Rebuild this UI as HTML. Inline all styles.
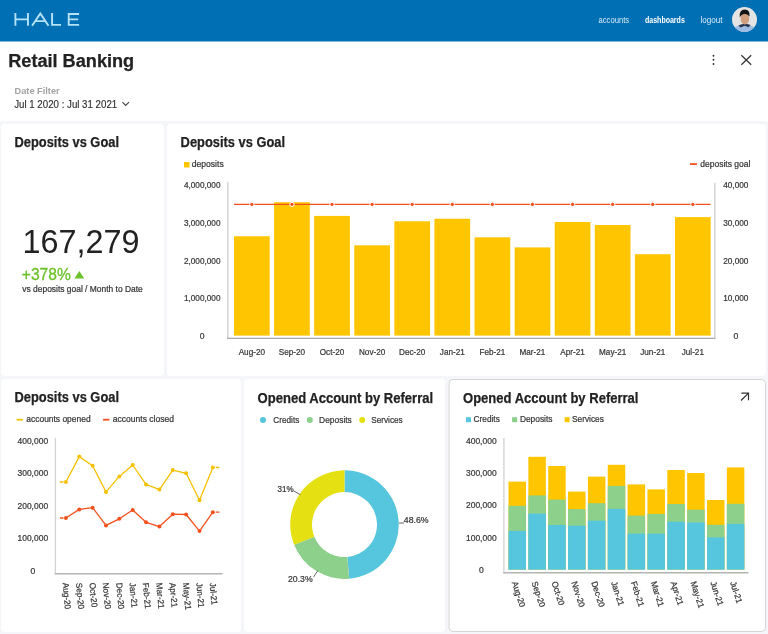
<!DOCTYPE html>
<html><head><meta charset="utf-8"><style>
html,body{margin:0;padding:0;background:#fff;width:768px;height:634px;overflow:hidden}
svg{display:block;font-family:"Liberation Sans", sans-serif;will-change:transform}
</style></head><body>
<svg width="768" height="634" viewBox="0 0 768 634">
<rect x="0" y="121" width="768" height="513" fill="#f5f6fa"/>
<rect x="0" y="0" width="768" height="41.5" fill="#006fb4"/>
<g fill="none" stroke="#b4e3f8" stroke-width="1.9"><path d="M15.4 13.1V25.8M27.95 13.1V25.8M15.4 19.4H27.95"/><path d="M32.1 25.8L40.3 13.4L48.5 25.8M35.6 21.1H45"/><path d="M52.1 13.1V24.85H61.1"/><path d="M79.1 14.05H68.7V24.85H79.1M68.7 19.4H78.2"/></g>
<text x="598.5" y="23.1" font-size="9" fill="#d6ebfa" textLength="30.6" lengthAdjust="spacingAndGlyphs" stroke="none">accounts</text>
<text x="645" y="23.1" font-size="9" fill="#ffffff" font-weight="700" textLength="39.8" lengthAdjust="spacingAndGlyphs">dashboards</text>
<text x="700.5" y="23.1" font-size="9" fill="#d6ebfa" textLength="22" lengthAdjust="spacingAndGlyphs" stroke="none">logout</text>
<circle cx="744.5" cy="19.5" r="12.5" fill="#e4e4e4"/>
<clipPath id="av"><circle cx="744.5" cy="19.5" r="12.5"/></clipPath>
<g clip-path="url(#av)"><path d="M731 36 L733 29 Q737 24.5 744.5 24.5 Q752 24.5 756 29 L758 36Z" fill="#9dbce3"/><path d="M738.5 25.5 Q741.5 23.5 744.8 24 Q748 23.5 750.5 25 L748.5 27.2 L744.8 25.8 L740.5 27.5Z" fill="#2b3652"/><ellipse cx="744.9" cy="18.6" rx="4.3" ry="5.9" fill="#cf9f7e"/><path d="M739.7 17.5 Q739 9.6 744.8 9.6 Q750.2 9.8 749.6 16.5 Q747.5 13.6 744.6 14 Q741.4 14 739.7 17.5Z" fill="#151515"/></g>
<text x="8.2" y="66.8" font-size="18" fill="#222" font-weight="700" textLength="126" lengthAdjust="spacingAndGlyphs" stroke="#222" stroke-width="0.25">Retail Banking</text>
<circle cx="713.5" cy="55.8" r="0.95" fill="#333"/>
<circle cx="713.5" cy="59.8" r="0.95" fill="#333"/>
<circle cx="713.5" cy="64" r="0.95" fill="#333"/>
<path d="M741.3 55.2L751.2 64.8M751.2 55.2L741.3 64.8" stroke="#333" stroke-width="1.2"/>
<text x="14.5" y="94.1" font-size="9.8" fill="#a3a3a3" font-weight="700" textLength="45.2" lengthAdjust="spacingAndGlyphs">Date Filter</text>
<text x="14.2" y="107.6" font-size="10.5" fill="#2e2e2e" textLength="103" lengthAdjust="spacingAndGlyphs" stroke="#2e2e2e" stroke-width="0.15">Jul 1 2020 : Jul 31 2021</text>
<path d="M122.4 102.2L125.7 105.5L129 102.2" fill="none" stroke="#444" stroke-width="1.1"/>
<rect x="1" y="124" width="163" height="252" rx="4" fill="#fff"/>
<rect x="167" y="124" width="599" height="252" rx="4" fill="#fff"/>
<rect x="1" y="379" width="240" height="253" rx="4" fill="#fff"/>
<rect x="244" y="379" width="201" height="253" rx="4" fill="#fff"/>
<rect x="449.1" y="379.5" width="316.4" height="252" rx="4" fill="#fff" stroke="#d5d5d5" stroke-width="1"/>
<text x="14.5" y="146.6" font-size="14.4" fill="#222" font-weight="700" textLength="104.5" lengthAdjust="spacingAndGlyphs" stroke="#222" stroke-width="0.25">Deposits vs Goal</text>
<text x="22.6" y="253.2" font-size="32.5" fill="#222" textLength="117" lengthAdjust="spacingAndGlyphs">167,279</text>
<text x="21.8" y="279.6" font-size="16" fill="#6cc22a" textLength="49" lengthAdjust="spacingAndGlyphs" stroke="#6cc22a" stroke-width="0.3">+378%</text>
<path d="M74.5 278.6L79.35 271L84.2 278.6Z" fill="#6cc22a"/>
<text x="22.3" y="291.7" font-size="8.4" fill="#363636" textLength="120.5" lengthAdjust="spacingAndGlyphs" stroke="#363636" stroke-width="0.22">vs deposits goal / Month to Date</text>
<text x="180.6" y="146.6" font-size="14.4" fill="#222" font-weight="700" textLength="104.5" lengthAdjust="spacingAndGlyphs" stroke="#222" stroke-width="0.25">Deposits vs Goal</text>
<rect x="184" y="162" width="5.5" height="5.5" fill="#ffc600"/>
<text x="191.7" y="166.6" font-size="8.6" fill="#363636" textLength="32" lengthAdjust="spacingAndGlyphs" stroke="#363636" stroke-width="0.22">deposits</text>
<rect x="690" y="163.2" width="7" height="1.8" fill="#f4511e"/>
<text x="700.2" y="166.6" font-size="8.6" fill="#363636" textLength="50.2" lengthAdjust="spacingAndGlyphs" stroke="#363636" stroke-width="0.22">deposits goal</text>
<text x="202.2" y="188.4" font-size="8.6" fill="#363636" text-anchor="middle" textLength="36.6" lengthAdjust="spacingAndGlyphs" stroke="#363636" stroke-width="0.22">4,000,000</text>
<text x="202.2" y="225.95000000000002" font-size="8.6" fill="#363636" text-anchor="middle" textLength="36.6" lengthAdjust="spacingAndGlyphs" stroke="#363636" stroke-width="0.22">3,000,000</text>
<text x="202.2" y="263.5" font-size="8.6" fill="#363636" text-anchor="middle" textLength="36.6" lengthAdjust="spacingAndGlyphs" stroke="#363636" stroke-width="0.22">2,000,000</text>
<text x="202.2" y="301.05" font-size="8.6" fill="#363636" text-anchor="middle" textLength="36.6" lengthAdjust="spacingAndGlyphs" stroke="#363636" stroke-width="0.22">1,000,000</text>
<text x="202.2" y="338.6" font-size="8.6" fill="#363636" text-anchor="middle" stroke="#363636" stroke-width="0.22">0</text>
<text x="735.8" y="188.4" font-size="8.6" fill="#363636" text-anchor="middle" textLength="25.3" lengthAdjust="spacingAndGlyphs" stroke="#363636" stroke-width="0.22">40,000</text>
<text x="735.8" y="225.95000000000002" font-size="8.6" fill="#363636" text-anchor="middle" textLength="25.3" lengthAdjust="spacingAndGlyphs" stroke="#363636" stroke-width="0.22">30,000</text>
<text x="735.8" y="263.5" font-size="8.6" fill="#363636" text-anchor="middle" textLength="25.3" lengthAdjust="spacingAndGlyphs" stroke="#363636" stroke-width="0.22">20,000</text>
<text x="735.8" y="301.05" font-size="8.6" fill="#363636" text-anchor="middle" textLength="25.3" lengthAdjust="spacingAndGlyphs" stroke="#363636" stroke-width="0.22">10,000</text>
<text x="735.8" y="338.6" font-size="8.6" fill="#363636" text-anchor="middle" stroke="#363636" stroke-width="0.22">0</text>
<rect x="234.00" y="236.25" width="35.7" height="99.35" fill="#ffc600"/>
<text x="251.85" y="354.6" font-size="8.6" fill="#363636" text-anchor="middle" textLength="26.33" lengthAdjust="spacingAndGlyphs" stroke="#363636" stroke-width="0.22">Aug-20</text>
<rect x="274.09" y="202.2" width="35.7" height="133.40" fill="#ffc600"/>
<text x="291.94" y="354.6" font-size="8.6" fill="#363636" text-anchor="middle" textLength="26.33" lengthAdjust="spacingAndGlyphs" stroke="#363636" stroke-width="0.22">Sep-20</text>
<rect x="314.18" y="215.9" width="35.7" height="119.70" fill="#ffc600"/>
<text x="332.03" y="354.6" font-size="8.6" fill="#363636" text-anchor="middle" textLength="24.51" lengthAdjust="spacingAndGlyphs" stroke="#363636" stroke-width="0.22">Oct-20</text>
<rect x="354.27" y="245.3" width="35.7" height="90.30" fill="#ffc600"/>
<text x="372.12" y="354.6" font-size="8.6" fill="#363636" text-anchor="middle" textLength="26.31" lengthAdjust="spacingAndGlyphs" stroke="#363636" stroke-width="0.22">Nov-20</text>
<rect x="394.36" y="221.25" width="35.7" height="114.35" fill="#ffc600"/>
<text x="412.21" y="354.6" font-size="8.6" fill="#363636" text-anchor="middle" textLength="26.31" lengthAdjust="spacingAndGlyphs" stroke="#363636" stroke-width="0.22">Dec-20</text>
<rect x="434.45" y="218.75" width="35.7" height="116.85" fill="#ffc600"/>
<text x="452.30" y="354.6" font-size="8.6" fill="#363636" text-anchor="middle" textLength="24.97" lengthAdjust="spacingAndGlyphs" stroke="#363636" stroke-width="0.22">Jan-21</text>
<rect x="474.54" y="237.3" width="35.7" height="98.30" fill="#ffc600"/>
<text x="492.39" y="354.6" font-size="8.6" fill="#363636" text-anchor="middle" textLength="25.87" lengthAdjust="spacingAndGlyphs" stroke="#363636" stroke-width="0.22">Feb-21</text>
<rect x="514.63" y="247.4" width="35.7" height="88.20" fill="#ffc600"/>
<text x="532.48" y="354.6" font-size="8.6" fill="#363636" text-anchor="middle" textLength="25.87" lengthAdjust="spacingAndGlyphs" stroke="#363636" stroke-width="0.22">Mar-21</text>
<rect x="554.72" y="222" width="35.7" height="113.60" fill="#ffc600"/>
<text x="572.57" y="354.6" font-size="8.6" fill="#363636" text-anchor="middle" textLength="24.51" lengthAdjust="spacingAndGlyphs" stroke="#363636" stroke-width="0.22">Apr-21</text>
<rect x="594.81" y="225" width="35.7" height="110.60" fill="#ffc600"/>
<text x="612.66" y="354.6" font-size="8.6" fill="#363636" text-anchor="middle" textLength="27.23" lengthAdjust="spacingAndGlyphs" stroke="#363636" stroke-width="0.22">May-21</text>
<rect x="634.90" y="254.2" width="35.7" height="81.40" fill="#ffc600"/>
<text x="652.75" y="354.6" font-size="8.6" fill="#363636" text-anchor="middle" textLength="24.97" lengthAdjust="spacingAndGlyphs" stroke="#363636" stroke-width="0.22">Jun-21</text>
<rect x="674.99" y="217.1" width="35.7" height="118.50" fill="#ffc600"/>
<text x="692.84" y="354.6" font-size="8.6" fill="#363636" text-anchor="middle" textLength="22.23" lengthAdjust="spacingAndGlyphs" stroke="#363636" stroke-width="0.22">Jul-21</text>
<path d="M227.8 182V338.2M714.8 338.2V182.7" fill="none" stroke="#d2d2d2" stroke-width="1.4"/>
<path d="M227.1 338.4H715.5" fill="none" stroke="#a8a8a8" stroke-width="1.2"/>
<path d="M234 204.4H710.6" stroke="#f4511e" stroke-width="1.1"/>
<circle cx="251.85" cy="204.4" r="2.15" fill="#f4511e" stroke="#fff" stroke-width="1"/>
<circle cx="291.94" cy="204.4" r="2.15" fill="#f4511e" stroke="#fff" stroke-width="1"/>
<circle cx="332.03" cy="204.4" r="2.15" fill="#f4511e" stroke="#fff" stroke-width="1"/>
<circle cx="372.12" cy="204.4" r="2.15" fill="#f4511e" stroke="#fff" stroke-width="1"/>
<circle cx="412.21" cy="204.4" r="2.15" fill="#f4511e" stroke="#fff" stroke-width="1"/>
<circle cx="452.30" cy="204.4" r="2.15" fill="#f4511e" stroke="#fff" stroke-width="1"/>
<circle cx="492.39" cy="204.4" r="2.15" fill="#f4511e" stroke="#fff" stroke-width="1"/>
<circle cx="532.48" cy="204.4" r="2.15" fill="#f4511e" stroke="#fff" stroke-width="1"/>
<circle cx="572.57" cy="204.4" r="2.15" fill="#f4511e" stroke="#fff" stroke-width="1"/>
<circle cx="612.66" cy="204.4" r="2.15" fill="#f4511e" stroke="#fff" stroke-width="1"/>
<circle cx="652.75" cy="204.4" r="2.15" fill="#f4511e" stroke="#fff" stroke-width="1"/>
<circle cx="692.84" cy="204.4" r="2.15" fill="#f4511e" stroke="#fff" stroke-width="1"/>
<text x="14.5" y="401.9" font-size="14.4" fill="#222" font-weight="700" textLength="104.5" lengthAdjust="spacingAndGlyphs" stroke="#222" stroke-width="0.25">Deposits vs Goal</text>
<rect x="16.6" y="418.8" width="6.2" height="1.8" fill="#f5c000"/>
<text x="26.3" y="422" font-size="8.6" fill="#363636" textLength="64.3" lengthAdjust="spacingAndGlyphs" stroke="#363636" stroke-width="0.22">accounts opened</text>
<rect x="103" y="418.8" width="6.4" height="1.8" fill="#f4511e"/>
<text x="112.7" y="422" font-size="8.6" fill="#363636" textLength="61.3" lengthAdjust="spacingAndGlyphs" stroke="#363636" stroke-width="0.22">accounts closed</text>
<text x="32.8" y="444.0" font-size="8.6" fill="#363636" text-anchor="middle" textLength="30.6" lengthAdjust="spacingAndGlyphs" stroke="#363636" stroke-width="0.22">400,000</text>
<text x="32.8" y="476.4" font-size="8.6" fill="#363636" text-anchor="middle" textLength="30.6" lengthAdjust="spacingAndGlyphs" stroke="#363636" stroke-width="0.22">300,000</text>
<text x="32.8" y="508.8" font-size="8.6" fill="#363636" text-anchor="middle" textLength="30.6" lengthAdjust="spacingAndGlyphs" stroke="#363636" stroke-width="0.22">200,000</text>
<text x="32.8" y="541.1999999999999" font-size="8.6" fill="#363636" text-anchor="middle" textLength="30.6" lengthAdjust="spacingAndGlyphs" stroke="#363636" stroke-width="0.22">100,000</text>
<text x="32.8" y="573.6" font-size="8.6" fill="#363636" text-anchor="middle" stroke="#363636" stroke-width="0.22">0</text>
<path d="M55.4 438V573.8" fill="none" stroke="#d2d2d2" stroke-width="1.3"/>
<path d="M54.7 573.8H222.5" fill="none" stroke="#b4b4b4" stroke-width="1.6"/>
<path d="M65.90 482 L79.26 456.6 L92.62 465.8 L105.98 491.9 L119.34 476.4 L132.70 465 L146.06 484.4 L159.42 489.6 L172.78 470.1 L186.14 473.3 L199.50 500.2 L212.86 467.5" fill="none" stroke="#f5c000" stroke-width="1.3" stroke-linejoin="round"/>
<path d="M59.9 482H63.5M215.7 467.5H219.4" fill="none" stroke="#f5c000" stroke-width="1.3"/>
<circle cx="65.90" cy="482" r="2" fill="#f5c000"/>
<circle cx="79.26" cy="456.6" r="2" fill="#f5c000"/>
<circle cx="92.62" cy="465.8" r="2" fill="#f5c000"/>
<circle cx="105.98" cy="491.9" r="2" fill="#f5c000"/>
<circle cx="119.34" cy="476.4" r="2" fill="#f5c000"/>
<circle cx="132.70" cy="465" r="2" fill="#f5c000"/>
<circle cx="146.06" cy="484.4" r="2" fill="#f5c000"/>
<circle cx="159.42" cy="489.6" r="2" fill="#f5c000"/>
<circle cx="172.78" cy="470.1" r="2" fill="#f5c000"/>
<circle cx="186.14" cy="473.3" r="2" fill="#f5c000"/>
<circle cx="199.50" cy="500.2" r="2" fill="#f5c000"/>
<circle cx="212.86" cy="467.5" r="2" fill="#f5c000"/>
<path d="M65.90 518 L79.26 509.4 L92.62 507.7 L105.98 525.4 L119.34 518.8 L132.70 510 L146.06 522.3 L159.42 526.6 L172.78 514.2 L186.14 514.5 L199.50 531.1 L212.86 512.2" fill="none" stroke="#f4511e" stroke-width="1.3" stroke-linejoin="round"/>
<path d="M59.9 518H63.5M215.7 512.2H219.4" fill="none" stroke="#f4511e" stroke-width="1.3"/>
<circle cx="65.90" cy="518" r="2" fill="#f4511e"/>
<circle cx="79.26" cy="509.4" r="2" fill="#f4511e"/>
<circle cx="92.62" cy="507.7" r="2" fill="#f4511e"/>
<circle cx="105.98" cy="525.4" r="2" fill="#f4511e"/>
<circle cx="119.34" cy="518.8" r="2" fill="#f4511e"/>
<circle cx="132.70" cy="510" r="2" fill="#f4511e"/>
<circle cx="146.06" cy="522.3" r="2" fill="#f4511e"/>
<circle cx="159.42" cy="526.6" r="2" fill="#f4511e"/>
<circle cx="172.78" cy="514.2" r="2" fill="#f4511e"/>
<circle cx="186.14" cy="514.5" r="2" fill="#f4511e"/>
<circle cx="199.50" cy="531.1" r="2" fill="#f4511e"/>
<circle cx="212.86" cy="512.2" r="2" fill="#f4511e"/>
<text transform="translate(62.70 583.0) rotate(85)" font-size="8.6" fill="#363636" stroke="#363636" stroke-width="0.22" textLength="26.33" lengthAdjust="spacingAndGlyphs">Aug-20</text>
<text transform="translate(76.06 583.0) rotate(85)" font-size="8.6" fill="#363636" stroke="#363636" stroke-width="0.22" textLength="26.33" lengthAdjust="spacingAndGlyphs">Sep-20</text>
<text transform="translate(89.42 583.0) rotate(85)" font-size="8.6" fill="#363636" stroke="#363636" stroke-width="0.22" textLength="24.51" lengthAdjust="spacingAndGlyphs">Oct-20</text>
<text transform="translate(102.78 583.0) rotate(85)" font-size="8.6" fill="#363636" stroke="#363636" stroke-width="0.22" textLength="26.31" lengthAdjust="spacingAndGlyphs">Nov-20</text>
<text transform="translate(116.14 583.0) rotate(85)" font-size="8.6" fill="#363636" stroke="#363636" stroke-width="0.22" textLength="26.31" lengthAdjust="spacingAndGlyphs">Dec-20</text>
<text transform="translate(129.50 583.0) rotate(85)" font-size="8.6" fill="#363636" stroke="#363636" stroke-width="0.22" textLength="24.97" lengthAdjust="spacingAndGlyphs">Jan-21</text>
<text transform="translate(142.86 583.0) rotate(85)" font-size="8.6" fill="#363636" stroke="#363636" stroke-width="0.22" textLength="25.87" lengthAdjust="spacingAndGlyphs">Feb-21</text>
<text transform="translate(156.22 583.0) rotate(85)" font-size="8.6" fill="#363636" stroke="#363636" stroke-width="0.22" textLength="25.87" lengthAdjust="spacingAndGlyphs">Mar-21</text>
<text transform="translate(169.58 583.0) rotate(85)" font-size="8.6" fill="#363636" stroke="#363636" stroke-width="0.22" textLength="24.51" lengthAdjust="spacingAndGlyphs">Apr-21</text>
<text transform="translate(182.94 583.0) rotate(85)" font-size="8.6" fill="#363636" stroke="#363636" stroke-width="0.22" textLength="27.23" lengthAdjust="spacingAndGlyphs">May-21</text>
<text transform="translate(196.30 583.0) rotate(85)" font-size="8.6" fill="#363636" stroke="#363636" stroke-width="0.22" textLength="24.97" lengthAdjust="spacingAndGlyphs">Jun-21</text>
<text transform="translate(209.66 583.0) rotate(85)" font-size="8.6" fill="#363636" stroke="#363636" stroke-width="0.22" textLength="22.23" lengthAdjust="spacingAndGlyphs">Jul-21</text>
<text x="257.6" y="402.5" font-size="14.4" fill="#222" font-weight="700" textLength="175.5" lengthAdjust="spacingAndGlyphs" stroke="#222" stroke-width="0.25">Opened Account by Referral</text>
<circle cx="263" cy="420" r="3" fill="#56c5de"/>
<text x="273.3" y="422.8" font-size="8.6" fill="#363636" textLength="26" lengthAdjust="spacingAndGlyphs" stroke="#363636" stroke-width="0.22">Credits</text>
<circle cx="309.8" cy="420" r="3" fill="#8dd08c"/>
<text x="319.1" y="422.8" font-size="8.6" fill="#363636" textLength="32.7" lengthAdjust="spacingAndGlyphs" stroke="#363636" stroke-width="0.22">Deposits</text>
<circle cx="362.2" cy="420" r="3" fill="#e5e012"/>
<text x="371.2" y="422.8" font-size="8.6" fill="#363636" textLength="31.5" lengthAdjust="spacingAndGlyphs" stroke="#363636" stroke-width="0.22">Services</text>
<path d="M344.50 470.30 A54.3 54.3 0 0 1 349.23 578.69 L347.33 556.98 A32.5 32.5 0 0 0 344.50 492.10Z" fill="#56c5de"/>
<path d="M349.23 578.69 A54.3 54.3 0 0 1 294.12 544.85 L314.35 536.72 A32.5 32.5 0 0 0 347.33 556.98Z" fill="#8dd08c"/>
<path d="M294.12 544.85 A54.3 54.3 0 0 1 344.50 470.30 L344.50 492.10 A32.5 32.5 0 0 0 314.35 536.72Z" fill="#e5e012"/>
<path d="M398.9 523H404M293.8 491L300.4 494.7M313.7 576.9L317.7 570.7" stroke="#555" stroke-width="0.9" fill="none"/>
<text x="403.8" y="523.1" font-size="8.6" fill="#363636" textLength="24.8" lengthAdjust="spacingAndGlyphs" stroke="#363636" stroke-width="0.22">48.6%</text>
<text x="277.5" y="491.6" font-size="8.6" fill="#363636" textLength="16.2" lengthAdjust="spacingAndGlyphs" stroke="#363636" stroke-width="0.22">31%</text>
<text x="288" y="581.7" font-size="8.6" fill="#363636" textLength="24.6" lengthAdjust="spacingAndGlyphs" stroke="#363636" stroke-width="0.22">20.3%</text>
<text x="463" y="402.9" font-size="14.4" fill="#222" font-weight="700" textLength="175.5" lengthAdjust="spacingAndGlyphs" stroke="#222" stroke-width="0.25">Opened Account by Referral</text>
<path d="M741.4 393.1H748.5V400.2M748.5 393.1L741 400.5" fill="none" stroke="#333" stroke-width="1.2"/>
<rect x="466" y="417.2" width="5" height="5" fill="#56c5de"/>
<text x="473.6" y="422.1" font-size="8.6" fill="#363636" textLength="26.2" lengthAdjust="spacingAndGlyphs" stroke="#363636" stroke-width="0.22">Credits</text>
<rect x="512.1" y="417.2" width="5" height="5" fill="#8dd08c"/>
<text x="519.9" y="422.1" font-size="8.6" fill="#363636" textLength="32.6" lengthAdjust="spacingAndGlyphs" stroke="#363636" stroke-width="0.22">Deposits</text>
<rect x="564.6" y="417.2" width="5" height="5" fill="#ffc600"/>
<text x="572" y="422.1" font-size="8.6" fill="#363636" textLength="31.8" lengthAdjust="spacingAndGlyphs" stroke="#363636" stroke-width="0.22">Services</text>
<text x="481.3" y="443.90000000000003" font-size="8.6" fill="#363636" text-anchor="middle" textLength="30.6" lengthAdjust="spacingAndGlyphs" stroke="#363636" stroke-width="0.22">400,000</text>
<text x="481.3" y="476.12" font-size="8.6" fill="#363636" text-anchor="middle" textLength="30.6" lengthAdjust="spacingAndGlyphs" stroke="#363636" stroke-width="0.22">300,000</text>
<text x="481.3" y="508.34000000000003" font-size="8.6" fill="#363636" text-anchor="middle" textLength="30.6" lengthAdjust="spacingAndGlyphs" stroke="#363636" stroke-width="0.22">200,000</text>
<text x="481.3" y="540.5600000000001" font-size="8.6" fill="#363636" text-anchor="middle" textLength="30.6" lengthAdjust="spacingAndGlyphs" stroke="#363636" stroke-width="0.22">100,000</text>
<text x="481.3" y="572.7800000000001" font-size="8.6" fill="#363636" text-anchor="middle" stroke="#363636" stroke-width="0.22">0</text>
<rect x="508.50" y="481.6" width="17.5" height="88.00" fill="#ffc600"/>
<rect x="508.50" y="505.8" width="17.5" height="63.80" fill="#8dd08c"/>
<rect x="508.50" y="530.9" width="17.5" height="38.70" fill="#56c5de"/>
<rect x="528.35" y="456.8" width="17.5" height="112.80" fill="#ffc600"/>
<rect x="528.35" y="495.4" width="17.5" height="74.20" fill="#8dd08c"/>
<rect x="528.35" y="513.6" width="17.5" height="56.00" fill="#56c5de"/>
<rect x="548.20" y="466" width="17.5" height="103.60" fill="#ffc600"/>
<rect x="548.20" y="499.6" width="17.5" height="70.00" fill="#8dd08c"/>
<rect x="548.20" y="525" width="17.5" height="44.60" fill="#56c5de"/>
<rect x="568.05" y="491.6" width="17.5" height="78.00" fill="#ffc600"/>
<rect x="568.05" y="509.1" width="17.5" height="60.50" fill="#8dd08c"/>
<rect x="568.05" y="525.7" width="17.5" height="43.90" fill="#56c5de"/>
<rect x="587.90" y="476.6" width="17.5" height="93.00" fill="#ffc600"/>
<rect x="587.90" y="503.2" width="17.5" height="66.40" fill="#8dd08c"/>
<rect x="587.90" y="520.7" width="17.5" height="48.90" fill="#56c5de"/>
<rect x="607.75" y="464.8" width="17.5" height="104.80" fill="#ffc600"/>
<rect x="607.75" y="485.9" width="17.5" height="83.70" fill="#8dd08c"/>
<rect x="607.75" y="508.9" width="17.5" height="60.70" fill="#56c5de"/>
<rect x="627.60" y="484.4" width="17.5" height="85.20" fill="#ffc600"/>
<rect x="627.60" y="515.6" width="17.5" height="54.00" fill="#8dd08c"/>
<rect x="627.60" y="533.6" width="17.5" height="36.00" fill="#56c5de"/>
<rect x="647.45" y="489.4" width="17.5" height="80.20" fill="#ffc600"/>
<rect x="647.45" y="513.9" width="17.5" height="55.70" fill="#8dd08c"/>
<rect x="647.45" y="533.6" width="17.5" height="36.00" fill="#56c5de"/>
<rect x="667.30" y="470" width="17.5" height="99.60" fill="#ffc600"/>
<rect x="667.30" y="504" width="17.5" height="65.60" fill="#8dd08c"/>
<rect x="667.30" y="521.7" width="17.5" height="47.90" fill="#56c5de"/>
<rect x="687.15" y="473" width="17.5" height="96.60" fill="#ffc600"/>
<rect x="687.15" y="509.7" width="17.5" height="59.90" fill="#8dd08c"/>
<rect x="687.15" y="522.5" width="17.5" height="47.10" fill="#56c5de"/>
<rect x="707.00" y="500" width="17.5" height="69.60" fill="#ffc600"/>
<rect x="707.00" y="524.8" width="17.5" height="44.80" fill="#8dd08c"/>
<rect x="707.00" y="537.4" width="17.5" height="32.20" fill="#56c5de"/>
<rect x="726.85" y="467.4" width="17.5" height="102.20" fill="#ffc600"/>
<rect x="726.85" y="503.8" width="17.5" height="65.80" fill="#8dd08c"/>
<rect x="726.85" y="523.9" width="17.5" height="45.70" fill="#56c5de"/>
<path d="M503.9 437.8V572.8" fill="none" stroke="#d2d2d2" stroke-width="1.3"/>
<path d="M503.2 572.8H748.4" fill="none" stroke="#b4b4b4" stroke-width="1.6"/>
<text transform="translate(511.75 582.4) rotate(72)" font-size="8.6" fill="#363636" stroke="#363636" stroke-width="0.22" textLength="26.61" lengthAdjust="spacingAndGlyphs">Aug-20</text>
<text transform="translate(531.60 582.4) rotate(72)" font-size="8.6" fill="#363636" stroke="#363636" stroke-width="0.22" textLength="26.61" lengthAdjust="spacingAndGlyphs">Sep-20</text>
<text transform="translate(551.45 582.4) rotate(72)" font-size="8.6" fill="#363636" stroke="#363636" stroke-width="0.22" textLength="24.77" lengthAdjust="spacingAndGlyphs">Oct-20</text>
<text transform="translate(571.30 582.4) rotate(72)" font-size="8.6" fill="#363636" stroke="#363636" stroke-width="0.22" textLength="26.59" lengthAdjust="spacingAndGlyphs">Nov-20</text>
<text transform="translate(591.15 582.4) rotate(72)" font-size="8.6" fill="#363636" stroke="#363636" stroke-width="0.22" textLength="26.59" lengthAdjust="spacingAndGlyphs">Dec-20</text>
<text transform="translate(611.00 582.4) rotate(72)" font-size="8.6" fill="#363636" stroke="#363636" stroke-width="0.22" textLength="25.23" lengthAdjust="spacingAndGlyphs">Jan-21</text>
<text transform="translate(630.85 582.4) rotate(72)" font-size="8.6" fill="#363636" stroke="#363636" stroke-width="0.22" textLength="26.14" lengthAdjust="spacingAndGlyphs">Feb-21</text>
<text transform="translate(650.70 582.4) rotate(72)" font-size="8.6" fill="#363636" stroke="#363636" stroke-width="0.22" textLength="26.14" lengthAdjust="spacingAndGlyphs">Mar-21</text>
<text transform="translate(670.55 582.4) rotate(72)" font-size="8.6" fill="#363636" stroke="#363636" stroke-width="0.22" textLength="24.77" lengthAdjust="spacingAndGlyphs">Apr-21</text>
<text transform="translate(690.40 582.4) rotate(72)" font-size="8.6" fill="#363636" stroke="#363636" stroke-width="0.22" textLength="27.51" lengthAdjust="spacingAndGlyphs">May-21</text>
<text transform="translate(710.25 582.4) rotate(72)" font-size="8.6" fill="#363636" stroke="#363636" stroke-width="0.22" textLength="25.23" lengthAdjust="spacingAndGlyphs">Jun-21</text>
<text transform="translate(730.10 582.4) rotate(72)" font-size="8.6" fill="#363636" stroke="#363636" stroke-width="0.22" textLength="22.46" lengthAdjust="spacingAndGlyphs">Jul-21</text>
</svg>
</body></html>
